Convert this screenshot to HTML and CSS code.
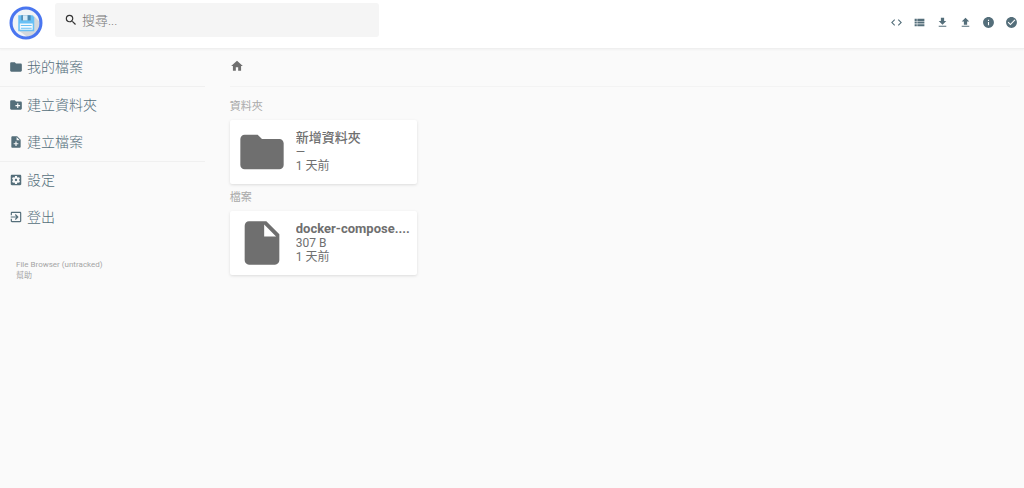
FILE: index.html
```html
<!DOCTYPE html>
<html lang="zh-TW">
<head>
    <meta charset="utf-8" />
    <meta name="viewport" content="width=device-width, initial-scale=1" />
    <title>File Browser</title>
    <link rel="stylesheet" href="styles.css">
</head>
<body>

    <!-- Header -->
    <header class="header">
        <svg class="logo" viewBox="0 0 66 66" aria-label="File Browser">
            <circle cx="33" cy="33" r="29" fill="#f1f4f6" />
            <path d="M46 17l15 15a29 29 0 0 1-24 29L18 47z" fill="#d3d8dc" />
            <path d="M18 18h27l4 4v27H18z" fill="#68c0f5" />
            <path d="M24 18h18v10H24z" fill="#4a86ad" />
            <path d="M27 18h9v10h-9z" fill="#d5ebf8" />
            <path d="M21 34h25v12H21z" fill="#f4fafe" />
            <path d="M23 38h21M23 43h21" stroke="#68c0f5" stroke-width="2" />
            <circle cx="33" cy="33" r="29" fill="none" stroke="#4a76f0" stroke-width="6" />
        </svg>
        <div class="search">
            <svg class="icon" viewBox="0 0 24 24"><path d="M15.5 14h-.79l-.28-.27A6.471 6.471 0 0 0 16 9.5 6.5 6.5 0 1 0 9.5 16c1.61 0 3.09-.59 4.23-1.57l.27.28v.79l5 4.99L20.49 19l-4.99-5zm-6 0C7.01 14 5 11.99 5 9.5S7.01 5 9.5 5 14 7.01 14 9.5 11.99 14 9.5 14z" /></svg>
            <input type="text" placeholder="搜尋..." aria-label="搜尋">
        </div>
        <div class="actions">
            <button class="action" aria-label="切換命令列">
                <svg class="icon" viewBox="0 0 24 24"><path d="M9.4 16.6L4.8 12l4.6-4.6L8 6l-6 6 6 6 1.4-1.4zm5.2 0l4.6-4.6-4.6-4.6L16 6l6 6-6 6-1.4-1.4z" /></svg>
            </button>
            <button class="action" aria-label="切換顯示方式">
                <svg class="icon" viewBox="0 0 24 24"><path d="M3 14h4v-4H3v4zm0 5h4v-4H3v4zM3 9h4V5H3v4zm5 5h13v-4H8v4zm0 5h13v-4H8v4zM8 5v4h13V5H8z" /></svg>
            </button>
            <button class="action" aria-label="下載">
                <svg class="icon" viewBox="0 0 24 24"><path d="M19 9h-4V3H9v6H5l7 7 7-7zM5 18v2h14v-2H5z" /></svg>
            </button>
            <button class="action" aria-label="上傳">
                <svg class="icon" viewBox="0 0 24 24"><path d="M9 16h6v-6h4l-7-7-7 7h4zm-4 2h14v2H5z" /></svg>
            </button>
            <button class="action" aria-label="資訊">
                <svg class="icon" viewBox="0 0 24 24"><path d="M12 2C6.48 2 2 6.48 2 12s4.48 10 10 10 10-4.48 10-10S17.52 2 12 2zm1 15h-2v-6h2v6zm0-8h-2V7h2v2z" /></svg>
            </button>
            <button class="action" aria-label="選擇多個">
                <svg class="icon" viewBox="0 0 24 24"><path d="M12 2C6.48 2 2 6.48 2 12s4.48 10 10 10 10-4.48 10-10S17.52 2 12 2zm-2 15l-5-5 1.41-1.41L10 14.17l7.59-7.59L19 8l-9 9z" /></svg>
            </button>
        </div>
    </header>

    <div class="layout">

        <!-- Sidebar -->
        <nav class="sidebar">
            <div class="nav-group">
                <a class="nav-item" href="#">
                    <svg class="icon" viewBox="0 0 24 24"><path d="M10 4H4c-1.1 0-1.99.9-1.99 2L2 18c0 1.1.9 2 2 2h16c1.1 0 2-.9 2-2V8c0-1.1-.9-2-2-2h-8l-2-2z" /></svg>
                    <span>我的檔案</span>
                </a>
            </div>
            <div class="nav-group">
                <button class="nav-item">
                    <svg class="icon" viewBox="0 0 24 24"><path d="M20 6h-8l-2-2H4c-1.11 0-1.99.89-1.99 2L2 18c0 1.11.89 2 2 2h16c1.11 0 2-.89 2-2V8c0-1.11-.89-2-2-2zm-1 8h-3v3h-2v-3h-3v-2h3V9h2v3h3v2z" /></svg>
                    <span>建立資料夾</span>
                </button>
                <button class="nav-item">
                    <svg class="icon" viewBox="0 0 24 24"><path d="M14 2H6c-1.1 0-1.99.9-1.99 2L4 20c0 1.1.89 2 1.99 2H18c1.1 0 2-.9 2-2V8l-6-6zm2 14h-3v3h-2v-3H8v-2h3v-3h2v3h3v2zm-3-7V3.5L18.5 9H13z" /></svg>
                    <span>建立檔案</span>
                </button>
            </div>
            <div class="nav-group">
                <a class="nav-item" href="#settings">
                    <svg class="icon" viewBox="0 0 24 24"><path d="M12 10c-1.1 0-2 .9-2 2s.9 2 2 2 2-.9 2-2-.9-2-2-2zm7-7H5c-1.11 0-2 .9-2 2v14c0 1.1.89 2 2 2h14c1.11 0 2-.9 2-2V5c0-1.1-.89-2-2-2zm-1.75 9c0 .23-.02.46-.05.68l1.48 1.16c.13.11.17.3.08.45l-1.4 2.42c-.09.15-.27.21-.43.15l-1.74-.7c-.36.28-.76.51-1.18.69l-.26 1.85c-.03.17-.18.3-.35.3h-2.8c-.17 0-.32-.13-.35-.29l-.26-1.85c-.43-.18-.82-.41-1.18-.69l-1.74.7c-.16.06-.34 0-.43-.15l-1.4-2.42c-.09-.15-.05-.34.08-.45l1.48-1.16c-.03-.23-.05-.46-.05-.69s.02-.46.05-.68l-1.48-1.16c-.13-.11-.17-.3-.08-.45l1.4-2.42c.09-.15.27-.21.43-.15l1.74.7c.36-.28.76-.51 1.18-.69l.26-1.85c.03-.17.18-.3.35-.3h2.8c.17 0 .32.13.35.29l.26 1.85c.43.18.82.41 1.18.69l1.74-.7c.16-.06.34 0 .43.15l1.4 2.42c.09.15.05.34-.08.45l-1.48 1.16c.03.23.05.46.05.69z" /></svg>
                    <span>設定</span>
                </a>
                <button class="nav-item">
                    <svg class="icon" viewBox="0 0 24 24"><path d="M10.09 15.59L11.5 17l5-5-5-5-1.41 1.41L12.67 11H3v2h9.67l-2.58 2.59zM19 3H5c-1.11 0-2 .9-2 2v4h2V5h14v14H5v-4H3v4c0 1.1.89 2 2 2h14c1.1 0 2-.9 2-2V5c0-1.1-.9-2-2-2z" /></svg>
                    <span>登出</span>
                </button>
            </div>
            <div class="credits">
                <span>File Browser (untracked)</span>
                <a href="#help">幫助</a>
            </div>
        </nav>

        <!-- Listing -->
        <main class="main">
            <div class="breadcrumbs">
                <a href="#" aria-label="首頁">
                    <svg class="icon" viewBox="0 0 24 24"><path d="M10 20v-6h4v6h5v-8h3L12 3 2 12h3v8z" /></svg>
                </a>
            </div>

            <h2 class="list-title">資料夾</h2>
            <div class="items">
                <a class="item" href="#folder">
                    <svg class="item-icon" viewBox="0 0 24 24"><path d="M10 4H4c-1.1 0-1.99.9-1.99 2L2 18c0 1.1.9 2 2 2h16c1.1 0 2-.9 2-2V8c0-1.1-.9-2-2-2h-8l-2-2z" /></svg>
                    <div class="item-info">
                        <p class="name">新增資料夾</p>
                        <p>—</p>
                        <p>1 天前</p>
                    </div>
                </a>
            </div>

            <h2 class="list-title">檔案</h2>
            <div class="items">
                <a class="item" href="#file">
                    <svg class="item-icon" viewBox="0 0 24 24"><path d="M6 2c-1.1 0-1.99.9-1.99 2L4 20c0 1.1.89 2 1.99 2H18c1.1 0 2-.9 2-2V8l-6-6H6zm7 7V3.5L18.5 9H13z" /></svg>
                    <div class="item-info">
                        <p class="name name-file">docker-compose....</p>
                        <p>307 B</p>
                        <p>1 天前</p>
                    </div>
                </a>
            </div>
        </main>
    </div>

</body>
</html>
```
FILE: styles.css
```css
* {
    box-sizing: border-box;
}

body {
    margin: 0;
    background-color: #fafafa;
    color: #6f6f6f;
    font-family: Roboto, "Noto Sans CJK TC", sans-serif;
    font-size: 12px;
}

a {
    color: inherit;
    text-decoration: none;
}

button {
    border: 0;
    background: none;
    font-family: inherit;
    cursor: pointer;
}

.icon {
    display: block;
    flex: none;
    width: 14px;
    height: 14px;
    fill: currentColor;
}

/* Header */
.header {
    display: flex;
    align-items: flex-start;
    padding: 3px 1px 8px 9px;
    background-color: #fff;
    border-bottom: 1px solid #efefef;
    box-shadow: 0 1px 2px rgba(0, 0, 0, 0.04);
}

.logo {
    width: 34px;
    height: 34px;
    margin: 3px 12px 0 0;
}

.search {
    display: flex;
    align-items: center;
    gap: 4px;
    width: 32%;
    height: 34px;
    padding: 0 9px;
    border-radius: 3px;
    background-color: #f5f5f5;
    color: #333;
}

.search input {
    flex: 1;
    min-width: 0;
    padding: 0;
    border: 0;
    outline: 0;
    background: none;
    font-family: inherit;
    font-size: 13px;
    font-weight: 300;
}

.search input::placeholder {
    color: #757575;
}

.actions {
    display: flex;
    align-self: center;
    margin: 1px 0 0 auto;
}

.action {
    padding: 5px;
    color: #546e7a;
}

.action .icon {
    width: 13px;
    height: 13px;
}

.layout {
    display: flex;
}

/* Sidebar */
.sidebar {
    flex: none;
    width: 20%;
}

.nav-group + .nav-group {
    border-top: 1px solid #f0f0f0;
}

.nav-item {
    display: flex;
    align-items: center;
    gap: 4px;
    width: 100%;
    height: 37px;
    padding: 0 9px 2px;
    color: #546e7a;
    font-size: 14px;
    font-weight: 300;
}

.nav-item span {
    padding-bottom: 2px;
}

.credits {
    display: flex;
    flex-direction: column;
    padding: 23px 16px;
    color: #a5a5a5;
    font-size: 8px;
    line-height: 11px;
}

/* Listing */
.main {
    flex: 1;
    min-width: 0;
    padding: 0 14px 0 25px;
}

.breadcrumbs {
    display: flex;
    align-items: center;
    height: 38px;
    padding-bottom: 4px;
    border-bottom: 1px solid #f3f3f3;
}

.list-title {
    margin: 0;
    color: #a9a9a9;
    font-size: 11px;
    font-weight: 400;
    line-height: 16px;
}

.breadcrumbs + .list-title {
    margin-top: 12px;
}

.items {
    display: flex;
    flex-wrap: wrap;
    gap: 8px;
    padding-top: 5px;
}

.items + .list-title {
    margin-top: 6px;
}

.item {
    display: flex;
    align-items: center;
    width: 24%;
    height: 64px;
    padding: 6px;
    border-radius: 2px;
    background-color: #fff;
    box-shadow: 0 1px 3px rgba(0, 0, 0, 0.12);
}

.item-icon {
    flex: none;
    width: 52px;
    height: 52px;
    margin-right: 8px;
    fill: #6f6f6f;
}

.item-info {
    min-width: 0;
}

.item-info p {
    margin: 0;
    line-height: 14px;
    overflow: hidden;
    text-overflow: ellipsis;
    white-space: nowrap;
}

.item-info .name {
    font-size: 13px;
    font-weight: 500;
}

.item-info .name-file {
    font-weight: 700;
}
```
